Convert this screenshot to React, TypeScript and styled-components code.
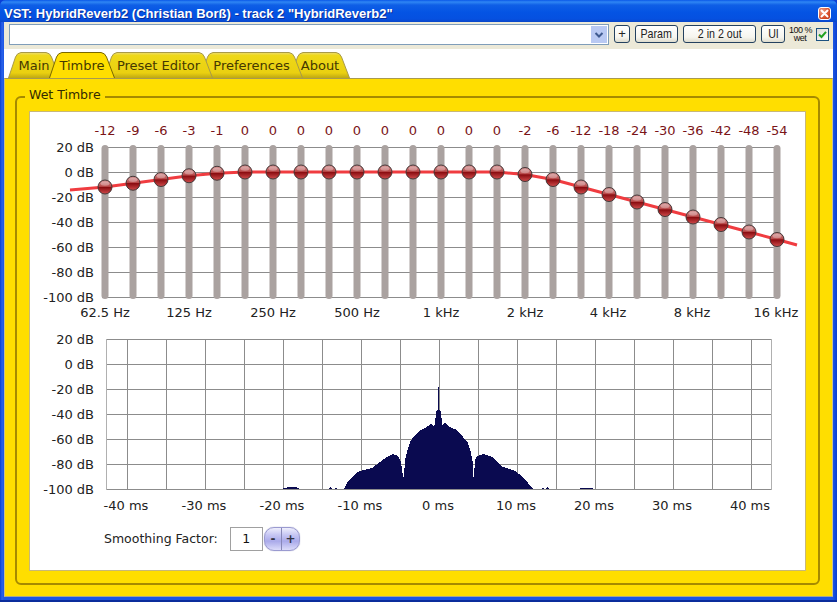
import React from "react";
import styled, { createGlobalStyle } from "styled-components";

const Global = createGlobalStyle`
  html, body { margin: 0; padding: 0; width: 837px; height: 602px; overflow: hidden; background: #0a3fd6; }
  * { box-sizing: border-box; }
`;

const Win = styled.div`
  width: 837px; height: 602px; display: flex; flex-direction: column;
  background: linear-gradient(90deg, #0a3fd0 0, #2a62ea 2px, #1c56e4 4px, #1c56e4 calc(100% - 4px), #0a3fd0 100%);
  border-bottom: 2px solid #0a2c9c;
  border-radius: 6px 6px 0 0; overflow: hidden;
`;
const TitleBar = styled.div`
  height: 22px; flex: none; display: flex; align-items: center; justify-content: space-between;
  padding: 4px 6px 0 4px;
  background: linear-gradient(180deg, #0a58e8 0, #2f86f4 2px, #0f5fe6 5px, #0454e4 12px, #0550e0 19px, #0a46c8 22px);
`;
const Title = styled.div`
  font: bold 13px/1 "Liberation Sans", sans-serif; letter-spacing: 0; color: #fff; white-space: pre;
  text-shadow: 1px 1px 0 #0a2f9c;
`;
const CloseBtn = styled.div`
  width: 13px; height: 13px; border: 1px solid #fff; border-radius: 3px;
  background: radial-gradient(circle at 30% 30%, #f0a088, #d8502c 60%, #b83010);
  display: flex; align-items: center; justify-content: center;
`;
const Body = styled.div`
  flex: 1; margin: 0 4px 3px 4px; background: #fff; display: flex; flex-direction: column; min-height: 0;
`;
const Toolbar = styled.div`
  height: 27px; flex: none; background: #ece9d8; display: flex; align-items: flex-start; padding: 2px 3px 0 5px;
  font-family: "DejaVu Sans", sans-serif;
`;
const Combo = styled.div`
  flex: none; width: 600px; height: 21px; background: #fff; border: 1px solid #7f9db9; display: flex; justify-content: flex-end; padding: 1px;
`;
const ComboBtn = styled.div`
  width: 16px; height: 17px; background: #b9c9f3; display: flex; align-items: center; justify-content: center;
`;
const ToolBtn = styled.div<{ $w: number; $ml: number }>`
  flex: none; width: ${(p) => p.$w}px; margin-left: ${(p) => p.$ml}px; height: 18px; margin-top: 1px;
  border: 1px solid #24415f; border-radius: 3px;
  background: linear-gradient(180deg, #fff 0, #f6f5ee 70%, #dedcce 100%);
  font: 13px/16px "Liberation Sans", sans-serif; color: #222; text-align: center; white-space: nowrap;
`;
const Narrow = styled.span`
  display: inline-block; transform: scaleX(0.82); transform-origin: center;
`;
const Wet = styled.div`
  flex: none; width: 22px; margin-left: 4px; text-align: center; font: 9px/8px "Liberation Sans", sans-serif; color: #111; white-space: pre; letter-spacing: -0.5px; margin-top: 2px;
`;
const Check = styled.div`
  flex: none; width: 13px; height: 13px; margin-left: 5px; margin-top: 4px; border: 1px solid #1c5180; background: linear-gradient(135deg, #dcdcd7, #fff);
  display: flex; align-items: center; justify-content: center;
`;
const TabStrip = styled.div`
  height: 29px; flex: none; display: flex; align-items: flex-end; padding-left: 4px; background: #fff;
`;
const Tab = styled.div<{ $w: number; $ml: number; $z: number }>`
  position: relative; flex: none; width: ${(p) => p.$w}px; height: 26px; margin-left: ${(p) => p.$ml}px;
  z-index: ${(p) => p.$z};
  font: 13px/26px "DejaVu Sans", sans-serif; color: #443800; text-align: center; padding-top: 1px;
`;
const TabShape = styled.svg`
  position: absolute; inset: 0; width: 100%; height: 100%; overflow: visible;
`;
const TabLabel = styled.span`
  position: relative;
`;
const Panel = styled.div`
  flex: 1; background: #ffde00; border-top: 1px solid #a89a50; border-left: 1px solid #c8c090; border-right: 1px solid #c8c090; border-bottom: 1px solid #a8a890;
  padding: 17px 12px 11px 10px; display: flex; min-height: 0; position: relative; z-index: 3; margin-top: 0;
`;
const Group = styled.div`
  position: relative; flex: 1; border: 2px solid #a68a00; border-radius: 6px; padding: 13px 12px 12px 12px; display: flex;
`;
const Legend = styled.div`
  position: absolute; top: -12px; left: 8px; padding: 0 4px; background: #ffde00; font: 12.5px/18px "DejaVu Sans", sans-serif; color: #332b00;
`;
const WhiteBox = styled.div`
  flex: 1; background: #fff; border: 1px solid #c8b878; display: flex; flex-direction: column; font-family: "DejaVu Sans", sans-serif;
`;
const EqChart = styled.svg`
  display: block; width: 774px; height: 212px; flex: none; overflow: visible;
`;
const RespChart = styled.svg`
  display: block; width: 774px; height: 190px; flex: none; overflow: visible;
`;
const Smooth = styled.div`
  display: flex; align-items: center; margin: 13px 0 0 74px; font: 12.5px/1 "DejaVu Sans", sans-serif; color: #222;
`;
const SmoothInput = styled.div`
  width: 33px; height: 24px; margin-left: 12px; border: 1px solid #a0a0a0; background: #fff; text-align: center; line-height: 22px; color: #111;
`;
const Stepper = styled.div`
  width: 36px; height: 24px; margin-left: 1px; display: flex; border: 1px solid #9a9ad0; border-radius: 10px; overflow: hidden;
  background: linear-gradient(180deg, #eeeefc 0, #c8c8f4 30%, #aaaaea 60%, #dcdcfa 100%);
  font: bold 12px/22px "DejaVu Sans", sans-serif; color: #334; box-shadow: 0 0 1px #8888bb;
`;
const StepPart = styled.div`
  flex: 1; text-align: center; & + & { border-left: 1px solid #8888b8; }
`;

const vals = [-12,-9,-6,-3,-1,0,0,0,0,0,0,0,0,0,0,-2,-6,-12,-18,-24,-30,-36,-42,-48,-54];
const OX = 30, OY = 112;
const dbLabels = ["20 dB","0 dB","-20 dB","-40 dB","-60 dB","-80 dB","-100 dB"];
const hz = [["62.5 Hz",105],["125 Hz",189],["250 Hz",273],["500 Hz",357],["1 kHz",441],["2 kHz",525],["4 kHz",608],["8 kHz",692],["16 kHz",776]] as const;

const linePts = [[70,190] as number[]].concat(vals.map((v,i)=>[105+28*i,172-v*1.25])).concat([[797,245]]);

const wave = "M344,489 L347,483 L352,477 L356,473 L360,471 L372,468 L380,462 L387,457 L393,454 L398,456 L401,462 L403,477 L404,477 L405,460 L407,452 L410,442 L414,436 L419,431 L425,428 L430,425 L431,423 L433,426 L435,425 L436,411 L437.5,410 L438.5,387 L439.5,410 L441,411 L442,425 L445,423 L450,427 L457,430 L463,437 L468,443 L471,453 L473,463 L473.5,477 L474,477 L475,460 L477,456 L483,454 L492,457 L503,467 L515,471 L523,477 L528,483 L533,489 Z M282,489 L284,488 L290,487 L296,487 L300,489 Z M328,489 L330,487 L332,489 Z M333,489 L336,488 L337,489 Z M540,489 L543,488 L545,489 Z M545,489 L547,487 L549,489 Z M578,489 L582,488 L590,488 L595,489 Z";

function Knob({ cx, cy }: { cx: number; cy: number }) {
  return (
    <g>
      <circle cx={cx} cy={cy} r={7} fill="url(#knob)" stroke="#443838" strokeWidth={1} />
      <ellipse cx={cx} cy={cy - 3.4} rx={4.4} ry={2.2} fill="#fff" opacity={0.3} />
    </g>
  );
}

const tabs = [
  { t: "Main", id: "a", w: 52, ml: 0, z: 5 },
  { t: "Timbre", id: "b", w: 66, ml: -11, z: 6, a: true },
  { t: "Preset Editor", id: "c", w: 109, ml: -11, z: 4 },
  { t: "Preferences", id: "d", w: 103, ml: -13, z: 3 },
  { t: "About", id: "e", w: 60, ml: -13, z: 2 },
];

export default function App() {
  return (
    <Win>
      <Global />
      <TitleBar>
        <Title>VST: HybridReverb2 (Christian Borß) - track 2 "HybridReverb2"</Title>
        <CloseBtn>
          <svg width="9" height="9" viewBox="0 0 9 9"><path d="M1.5 1.5 L7.5 7.5 M7.5 1.5 L1.5 7.5" stroke="#fff" strokeWidth="2" strokeLinecap="round"/></svg>
        </CloseBtn>
      </TitleBar>
      <Body>
        <Toolbar>
          <Combo>
            <ComboBtn>
              <svg width="10" height="8" viewBox="0 0 10 8"><path d="M1.5 2 L5 5.5 L8.5 2" fill="none" stroke="#3f5a90" strokeWidth="2"/></svg>
            </ComboBtn>
          </Combo>
          <ToolBtn $w={16} $ml={5}>+</ToolBtn>
          <ToolBtn $w={43} $ml={5}><Narrow>Param</Narrow></ToolBtn>
          <ToolBtn $w={73} $ml={5}><Narrow>2 in 2 out</Narrow></ToolBtn>
          <ToolBtn $w={24} $ml={5}><Narrow>UI</Narrow></ToolBtn>
          <Wet>{"100 %\nwet"}</Wet>
          <Check>
            <svg width="11" height="11" viewBox="0 0 11 11"><path d="M2 5.5 L4.5 8 L9 2.8" fill="none" stroke="#21a121" strokeWidth="2"/></svg>
          </Check>
        </Toolbar>
        <TabStrip>
          {tabs.map((t) => (
            <Tab key={t.t} $w={t.w} $ml={t.ml} $z={t.z}>
              <TabShape viewBox={`0 0 ${t.w} 26`} preserveAspectRatio="none">
                <defs>
                  <linearGradient id={"tg" + t.id} x1="0" y1="0" x2="0" y2="1">
                    <stop offset="0" stopColor={t.a ? "#ffde00" : "#ecdc70"} />
                    <stop offset="0.12" stopColor={t.a ? "#ffde00" : "#eed818"} />
                    <stop offset="0.8" stopColor={t.a ? "#ffde00" : "#ead010"} />
                    <stop offset="1" stopColor={t.a ? "#ffde00" : "#bea812"} />
                  </linearGradient>
                </defs>
                <path
                  d={`M0.5 26 L7.5 5 Q9 1 13 0.5 L${t.w - 14} 0.5 Q${t.w - 10} 1 ${t.w - 8.5} 5 L${t.w - 0.5} 26`}
                  fill={`url(#tg${t.id})`}
                  stroke={t.a ? "#7a6800" : "#a89a48"}
                  strokeWidth={1}
                />
              </TabShape>
              <TabLabel>{t.t}</TabLabel>
            </Tab>
          ))}
        </TabStrip>
        <Panel>
          <Group>
            <Legend>Wet Timbre</Legend>
            <WhiteBox>
              <EqChart viewBox={`${OX} ${OY} 774 212`}>
                <defs>
                  <linearGradient id="knob" x1="0" y1="0" x2="0" y2="1">
                    <stop offset="0" stopColor="#d49898" />
                    <stop offset="0.46" stopColor="#b84848" />
                    <stop offset="0.52" stopColor="#8a0c10" />
                    <stop offset="1" stopColor="#d04c4c" />
                  </linearGradient>
                </defs>
                {dbLabels.map((d, i) => (
                  <g key={d}>
                    <line x1={102} x2={778} y1={147.5 + 25 * i} y2={147.5 + 25 * i} stroke="#8c8c8c" />
                    <text x={94} y={152 + 25 * i} textAnchor="end" fontSize={13} fill="#222">{d}</text>
                  </g>
                ))}
                {vals.map((v, i) => (
                  <g key={i}>
                    <rect x={101.5 + 28 * i} y={145} width={7} height={154} rx={3.5} fill="#aaa2a0" />
                    <text x={105 + 28 * i} y={135} textAnchor="middle" fontSize={13} fill="#7a1418">{v}</text>
                  </g>
                ))}
                <polyline points={linePts.map((p) => p.join(",")).join(" ")} fill="none" stroke="#f03c40" strokeWidth={3} />
                {vals.map((v, i) => (
                  <Knob key={i} cx={105 + 28 * i} cy={172 - v * 1.25} />
                ))}
                {hz.map(([l, x]) => (
                  <text key={l} x={x} y={317} textAnchor="middle" fontSize={13} fill="#222">{l}</text>
                ))}
              </EqChart>
              <RespChart viewBox={`${OX} 324 774 190`}>
                {dbLabels.map((d, i) => (
                  <g key={d}>
                    <line x1={106} x2={771} y1={339.5 + 25 * i} y2={339.5 + 25 * i} stroke="#8c8c8c" />
                    <text x={94} y={344 + 25 * i} textAnchor="end" fontSize={13} fill="#222">{d}</text>
                  </g>
                ))}
                {[106, ...Array.from({ length: 17 }, (_, i) => 127 + 39 * i), 771].map((x) => (
                  <line key={x} x1={x + 0.5} x2={x + 0.5} y1={339} y2={490} stroke={x === 106 || x === 771 ? "#b0b0b0" : "#8c8c8c"} />
                ))}
                <path d={wave} fill="#0a0a50" shapeRendering="crispEdges" />
                {["-40 ms","-30 ms","-20 ms","-10 ms","0 ms","10 ms","20 ms","30 ms","40 ms"].map((l, i) => (
                  <text key={l} x={126 + 78 * i} y={510} textAnchor="middle" fontSize={13} fill="#222">{l}</text>
                ))}
              </RespChart>
              <Smooth>
                Smoothing Factor:
                <SmoothInput>1</SmoothInput>
                <Stepper><StepPart>-</StepPart><StepPart>+</StepPart></Stepper>
              </Smooth>
            </WhiteBox>
          </Group>
        </Panel>
      </Body>
    </Win>
  );
}
